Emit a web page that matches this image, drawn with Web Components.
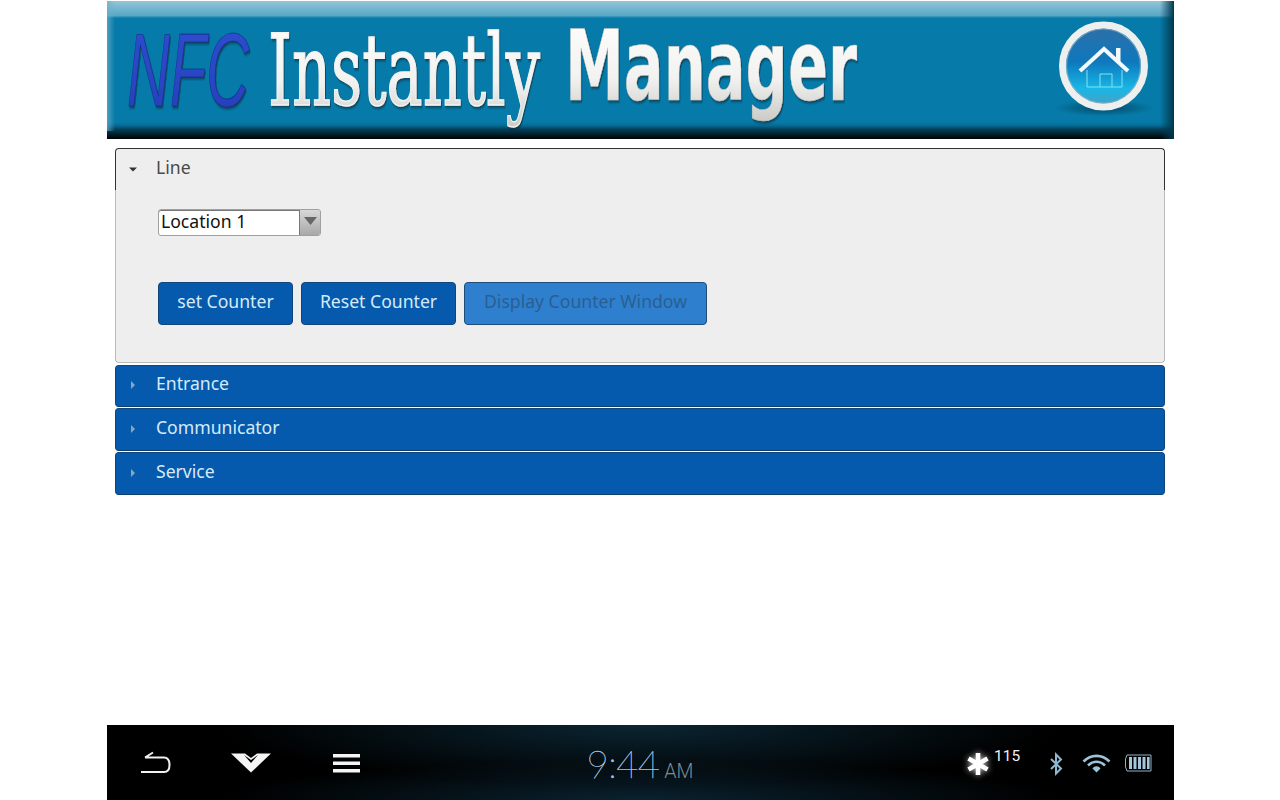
<!DOCTYPE html>
<html><head><meta charset="utf-8"><title>NFC Instantly Manager</title>
<style>html,body{margin:0;padding:0;background:#fff;height:100%;overflow:hidden}body{font-family:"Noto Sans","Open Sans",sans-serif}</style>
</head><body>
<nfc-app>
  <nfc-banner slot="banner"></nfc-banner>
  <nfc-accordion slot="content">
    <nfc-section label="Line" open>
      <nfc-select value="Location 1"></nfc-select>
      <nfc-actions>
        <nfc-button style="--w:135px">set Counter</nfc-button>
        <nfc-button style="--w:155px">Reset Counter</nfc-button>
        <nfc-button style="--w:243px" disabled>Display Counter Window</nfc-button>
      </nfc-actions>
    </nfc-section>
    <nfc-section label="Entrance" style="--h:40px"></nfc-section>
    <nfc-section label="Communicator"></nfc-section>
    <nfc-section label="Service"></nfc-section>
  </nfc-accordion>
  <nfc-systembar slot="bar"></nfc-systembar>
</nfc-app>
<script>
function def(name,html,init){customElements.define(name,class extends HTMLElement{
  constructor(){super();const r=this.attachShadow({mode:'open'});r.innerHTML=html;}
  connectedCallback(){if(init)init.call(this,this.shadowRoot);}
});}
def('nfc-app',`<style>:host{display:flex;flex-direction:column;width:1067px;height:800px;margin-left:107px}
.c{flex:1;padding:9px 9px 0 8px}</style>
<slot name="banner"></slot><div class="c"><slot name="content"></slot></div><slot name="bar"></slot>`);

def('nfc-banner',`<style>:host{display:block;height:139px}svg{display:block}</style>
<svg width="1067" height="139" viewBox="0 0 1067 139">
<defs>
<linearGradient id="top" x1="0" y1="0" x2="0" y2="1"><stop offset="0" stop-color="#93c6d8"/><stop offset=".85" stop-color="#5aa8c6"/><stop offset="1" stop-color="#0a7caa"/></linearGradient>
<linearGradient id="bot" x1="0" y1="0" x2="0" y2="1"><stop offset="0" stop-color="#067aa8" stop-opacity="0"/><stop offset=".45" stop-color="#03425c"/><stop offset="1" stop-color="#000"/></linearGradient>
<linearGradient id="r" x1="0" y1="0" x2="1" y2="0"><stop offset="0" stop-color="#00384e" stop-opacity="0"/><stop offset="1" stop-color="#00384e"/></linearGradient>
<linearGradient id="l" x1="0" y1="0" x2="1" y2="0"><stop offset="0" stop-color="#6db0c8"/><stop offset="1" stop-color="#6db0c8" stop-opacity="0"/></linearGradient>
<linearGradient id="metal" x1="0" y1="0" x2="0" y2="1"><stop offset="0" stop-color="#fff"/><stop offset=".6" stop-color="#f2f2f0"/><stop offset="1" stop-color="#c9c9c6"/></linearGradient>
<linearGradient id="nfc" x1="0" y1="0" x2="0" y2="1"><stop offset="0" stop-color="#2f4fd0"/><stop offset="1" stop-color="#263eb8"/></linearGradient>
<linearGradient id="ball" x1="0" y1="0" x2="0" y2="1"><stop offset="0" stop-color="#2f6fa6"/><stop offset=".45" stop-color="#0e78bd"/><stop offset=".78" stop-color="#19b7e6"/><stop offset="1" stop-color="#4f9dbd"/></linearGradient>
<radialGradient id="shade" cx=".5" cy=".5" r=".5"><stop offset="0" stop-color="#003a52" stop-opacity=".75"/><stop offset="1" stop-color="#003a52" stop-opacity="0"/></radialGradient>
<filter id="sh" x="-5%" y="-10%" width="110%" height="125%"><feDropShadow dx="1.5" dy="2" stdDeviation="1" flood-color="#123" flood-opacity=".65"/></filter>
</defs>
<rect y="1" width="1067" height="138" fill="#067aa8"/>
<rect y="1" width="1067" height="17" fill="url(#top)"/>
<rect y="121" width="1067" height="18" fill="url(#bot)"/>
<rect x="1053" y="1" width="14" height="138" fill="url(#r)"/>
<rect y="1" width="8" height="130" fill="url(#l)" opacity=".7"/>
<text transform="translate(20 106) scale(.571 1)" font-family="Liberation Sans" font-style="italic" font-size="104" fill="url(#nfc)" stroke="#17268a" stroke-width=".6" filter="url(#sh)">NFC</text>
<text transform="translate(161 105) scale(.607 1)" font-family="DejaVu Serif" font-size="100" fill="url(#metal)" stroke="#f4f4f2" stroke-width="1.4" filter="url(#sh)">Instantly</text>
<text transform="translate(458 100) scale(.603 1)" font-family="DejaVu Sans" font-weight="700" font-size="98" fill="url(#metal)" stroke="#b9b9b6" stroke-width=".5" filter="url(#sh)">Manager</text>
<ellipse cx="997" cy="108" rx="50" ry="8" fill="url(#shade)"/>
<circle cx="996.5" cy="66" r="41" fill="url(#ball)" stroke="#eef0f0" stroke-width="7"/>
<circle cx="996.5" cy="66" r="37" fill="none" stroke="#8fb4c8" stroke-width="1.2" opacity=".7"/>
<path d="M973 71 L997 49 L1021 71" fill="none" stroke="#f4fafc" stroke-width="4"/>
<path d="M1009 48h4.5v14h-4.5z" fill="#f4fafc"/>
<path d="M980 70V87H1015V70M993 87V74h12V87" fill="none" stroke="#7fe6f4" stroke-width="1"/>
</svg>`);

def('nfc-accordion',`<style>:host{display:flex;flex-direction:column;gap:1px}</style><slot></slot>`);

def('nfc-section',`<style>
:host{display:block;color:#d6ebf8;font-size:17.6px}
:host([open]){margin-bottom:1px}
.h{height:var(--h,41px);display:flex;align-items:center;background:#055aae;border:1px solid #12457a;border-bottom-color:#0f3f6c;border-radius:4px}
.h span{line-height:36px;margin:-2px 0 4px}
.t{width:40px;display:flex;justify-content:center;flex:none;padding:0 6px 2px 0;box-sizing:border-box}
svg{display:block}
.b{display:none}
:host([open]) .h{background:#eee;color:#4a4a4a;border-color:#333;border-bottom:none;border-radius:4px 4px 0 0}
:host([open]) .b{display:block;height:173px;background:#eee;border:1px solid #bbb;border-top:none;border-radius:0 0 4px 4px;box-sizing:border-box;padding:19px 42px 0}
</style>
<div class="h"><div class="t"><svg width="8" height="8" viewBox="0 0 8 8"><path class="m" d=""/></svg></div><span></span></div>
<div class="b"><slot></slot></div>`,function(r){
  r.querySelector('span').textContent=this.getAttribute('label');
  const m=r.querySelector('.m');
  if(this.hasAttribute('open')){m.setAttribute('d','M0 2.5H8L4 6.5Z');m.setAttribute('fill','#333');}
  else{m.setAttribute('d','M2 0V8L6 4Z');m.setAttribute('fill','#8aa5bc');}
});

def('nfc-select',`<style>:host{display:flex;width:163px;height:27px;box-sizing:border-box;border:1px solid #a0a0a0;border-radius:3px;background:#fff;overflow:hidden;color:#111;font-size:17.6px;box-shadow:inset 0 1px 0 #777}
.v{flex:1;line-height:22px;padding-left:2px;border-right:1px solid #777}
.a{width:20px;background:linear-gradient(#d8d8d8,#a8a8a8);display:flex;align-items:center;justify-content:center;padding-bottom:3px;box-sizing:border-box}
svg{display:block}</style>
<div class="v"></div><div class="a"><svg width="13" height="8" viewBox="0 0 13 8"><path d="M0 0H13L6.5 8Z" fill="#666"/></svg></div>`,function(r){r.querySelector('.v').textContent=this.getAttribute('value');});

def('nfc-actions',`<style>:host{display:flex;gap:8px;margin-top:46px}</style><slot></slot>`);

def('nfc-button',`<style>:host{display:block;width:var(--w);height:43px;box-sizing:border-box;text-align:center;line-height:36px;font-size:17.6px;background:#055aae;border:1px solid #12457a;border-radius:4px;color:#d6ebf8;white-space:nowrap}
:host([disabled]){background:#2e80cf;color:#2a5e92;border-color:#1f4d78}</style><slot></slot>`);

def('nfc-systembar',`<style>:host{display:grid;grid-template-columns:1fr auto 1fr;align-items:center;height:75px;background:radial-gradient(ellipse 420px 60px at 50% 0,#0b2532 0,rgba(6,22,30,0) 100%),radial-gradient(ellipse 420px 40px at 50% 100%,#0a2230 0,rgba(6,22,30,0) 100%),#000;color:#fff}
svg{display:block}
.l{display:flex;align-items:center;padding-left:33px}
.c{display:flex;align-items:baseline;color:#a4c8e4;padding-top:1px;margin-left:-1px}
.tm{font-family:Lato,"Noto Sans",sans-serif;font-weight:100;font-size:38.5px;line-height:50px;letter-spacing:-.8px;-webkit-text-stroke:.35px #a4c8e4}
.ap{font-family:Roboto,sans-serif;font-weight:300;font-size:19.5px;color:#7d8b95;margin-left:5px}
.r{display:flex;align-items:center;justify-content:flex-end;padding-right:22px}
.n{font-family:Roboto,sans-serif;font-size:15.5px;line-height:18px;margin:-13px 0 0 2px;color:#f0f0f0;width:25px}</style>
<div class="l">
<svg width="32" height="24" viewBox="0 0 32 24" style="margin-right:58px"><path d="M1 21H24C28.5 21 29.5 18 29.5 14 29.5 9 28 6.5 24 6.5H5M5 6.5 13 1.5" fill="none" stroke="#f2f2f2" stroke-width="2"/></svg>
<svg width="42" height="20" viewBox="0 0 42 20" style="margin-right:60px"><path d="M1 0.5H15L21 5 27 0.5H41L21 19.5Z M14 2 21 10 28 2 21 7Z" fill="#f5f5f5" fill-rule="evenodd"/></svg>
<svg width="29" height="20" viewBox="0 0 29 20"><path d="M1 1H28V4.5H1ZM1 8.5H28V12H1ZM1 16H28V19.5H1Z" fill="#f5f5f5"/></svg>
</div>
<div class="c"><span class="tm">9:44</span><span class="ap">AM</span></div>
<div class="r">
<svg width="28" height="28" viewBox="0 0 28 28" style="filter:drop-shadow(0 0 3px #ccc);margin-top:2px"><g stroke="#fff" stroke-width="4.6"><path d="M14 3V25M4.5 8.5 23.5 19.5M23.5 8.5 4.5 19.5"/></g></svg>
<span class="n">115</span>
<svg width="16" height="24" viewBox="0 0 16 24" style="margin:2px 18px 0 29px"><path d="M3 7 13 16.5 8 21.5V2.5L13 7.5 3 17" fill="none" stroke="#8fb8d0" stroke-width="2"/></svg>
<svg width="29" height="20" viewBox="0 0 29 20" style="margin-right:13px"><g fill="none" stroke="#9cc3d8" stroke-width="2.6"><path d="M1.5 8.5C9 1 20 1 27.5 8.5"/><path d="M6 12.5C11 7.5 18 7.5 23 12.5"/></g><path d="M10.5 15.5C12.5 12.5 16.5 12.5 18.5 15.5L14.5 19.5Z" fill="#9cc3d8"/></svg>
<svg width="28" height="18" viewBox="0 0 28 18"><path d="M3 1H27V17H3L1.5 13V5Z" fill="none" stroke="#8fb3c8" stroke-width="1"/><path d="M5 3h3v12H5zM9.500 3h3v12h-3zM14 3h3v12h-3zM18.500 3h3v12h-3zM23 3h2.600v12H23z" fill="#a4c6da"/></svg>
</div>`);
</script>
</body></html>
